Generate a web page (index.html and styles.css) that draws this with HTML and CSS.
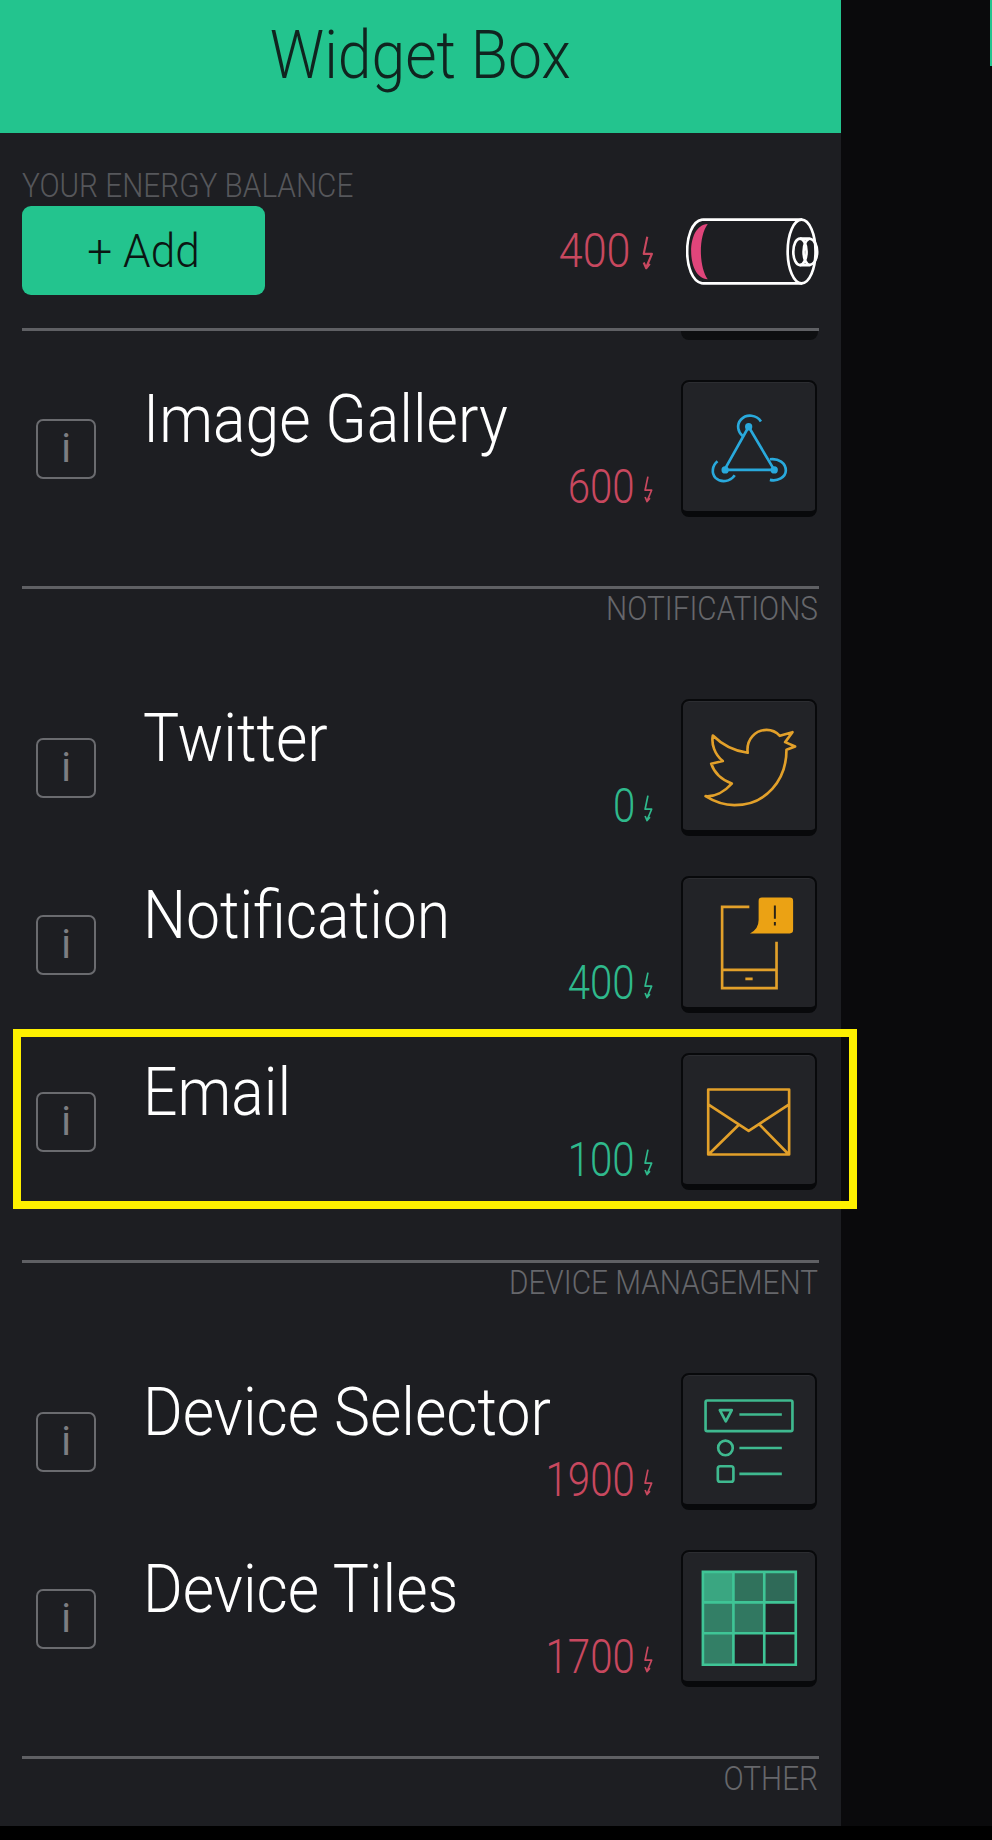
FILE: index.html
```html
<!DOCTYPE html>
<html lang="en">
<head>
<meta charset="utf-8">
<title>Widget Box</title>
<link rel="stylesheet" href="styles.css">
</head>
<body>
<svg class="defs" width="0" height="0" aria-hidden="true">
  <symbol id="bolt" viewBox="0 0 30 95">
    <path d="M13 2 L3 50 H26 L10 88 M3 74 L10 90 L20 78" fill="none" stroke="currentColor" stroke-width="6" stroke-linejoin="round"/>
  </symbol>
</svg>
<div class="screen">
  <main class="panel">
    <header class="header"><h1 class="title">Widget Box</h1></header>
    <section class="balance">
      <div class="label label-left">YOUR ENERGY BALANCE</div>
      <div class="balance-row">
        <button class="add"><span class="add-text">+ Add</span></button>
        <div class="balance-right">
          <div class="price red"><span class="amount amount-lg">400</span><svg class="bolt bolt-lg"><use href="#bolt"/></svg></div>
          <svg class="battery" viewBox="500 50 400 202">
            <path d="M565 68 C530 70 515 110 515 150 C515 190 530 232 565 235 C540 200 535 110 565 68 Z" fill="#e0457b"/>
            <g fill="none" stroke="#fff" stroke-width="8">
              <path d="M548 55 H850 M548 247 H850 M548 55 C516 60 503 110 503 150 C503 195 518 242 548 247"/>
              <ellipse cx="848" cy="151" rx="42" ry="96"/>
              <ellipse cx="843" cy="152" rx="20" ry="40"/>
              <path d="M843 112 H872 C888 115 895 135 895 152 C895 170 888 188 872 192 H843 M872 112 C848 122 848 182 872 192"/>
            </g>
          </svg>
        </div>
      </div>
    </section>
    <div class="divider divider-top"></div>
    <div class="stub-wrap"><div class="stub"></div></div>
    <div class="gallery-gap"></div>

    <div class="row">
      <div class="info"><span>i</span></div>
      <div class="body">
        <div class="name">Image Gallery</div>
        <div class="price red"><span class="amount">600</span><svg class="bolt"><use href="#bolt"/></svg></div>
      </div>
      <div class="tile">
        <svg class="icon" viewBox="68 570 402 404">
          <g fill="none" stroke="#29a9dc" stroke-width="8">
            <path d="M268 708 L195 838 H345 Z"/>
            <path d="M305 692 C292 672 262 668 245 686 C230 702 236 725 250 736"/>
            <path d="M174 812 C158 825 155 848 168 862 C185 878 212 874 226 854"/>
            <path d="M332 806 C358 802 380 818 380 840 C380 860 355 874 332 868"/>
          </g>
          <g fill="#29a9dc"><circle cx="268" cy="708" r="11"/><circle cx="197" cy="838" r="11"/><circle cx="345" cy="838" r="11"/></g>
        </svg>
      </div>
    </div>

    <div class="divider section-divider"></div>
    <div class="label label-right">NOTIFICATIONS</div>

    <div class="row">
      <div class="info"><span>i</span></div>
      <div class="body">
        <div class="name">Twitter</div>
        <div class="price green"><span class="amount">0</span><svg class="bolt"><use href="#bolt"/></svg></div>
      </div>
      <div class="tile">
        <svg class="icon" viewBox="68 58 402 404">
          <path d="M160 165 C190 195 225 212 265 217 C260 175 290 148 322 148 C340 148 352 155 362 166 L400 155 L378 185 L408 198 L382 208 C382 300 320 375 225 375 C195 375 165 365 138 348 C165 350 195 335 217 310 C190 300 165 280 155 250 L190 242 C165 222 155 190 160 165 Z" fill="none" stroke="#e2a02a" stroke-width="8" stroke-linejoin="round"/>
        </svg>
      </div>
    </div>
    <div class="row">
      <div class="info"><span>i</span></div>
      <div class="body">
        <div class="name">Notification</div>
        <div class="price green"><span class="amount">400</span><svg class="bolt"><use href="#bolt"/></svg></div>
      </div>
      <div class="tile">
        <svg class="icon" viewBox="68 590 402 404">
          <path d="M270 680 H188 V925 H352 V785 M188 870 H352 M258 897 H280" fill="none" stroke="#e2a02a" stroke-width="8"/>
          <path d="M308 652 H392 Q402 652 402 662 V750 Q402 760 392 760 H272 Q298 748 298 720 V662 Q298 652 308 652 Z" fill="#eba214"/>
          <path d="M347 676 V716 M347 726 V736" stroke="#2a2418" stroke-width="6" fill="none"/>
        </svg>
      </div>
    </div>
    <div class="row">
      <div class="info"><span>i</span></div>
      <div class="body">
        <div class="name">Email</div>
        <div class="price green"><span class="amount">100</span><svg class="bolt"><use href="#bolt"/></svg></div>
      </div>
      <div class="tile">
        <svg class="icon" viewBox="68 40 402 404">
          <path d="M146 147 H390 V343 H146 Z M146 192 L268 272 L390 192 M150 340 L240 252 M386 340 L300 252" fill="none" stroke="#e2a02a" stroke-width="8" stroke-linejoin="round"/>
        </svg>
      </div>
      <div class="highlight"></div>
    </div>

    <div class="divider section-divider section-divider-wide"></div>
    <div class="label label-right">DEVICE MANAGEMENT</div>

    <div class="row">
      <div class="info"><span>i</span></div>
      <div class="body">
        <div class="name">Device Selector</div>
        <div class="price red"><span class="amount">1900</span><svg class="bolt"><use href="#bolt"/></svg></div>
      </div>
      <div class="tile">
        <svg class="icon" viewBox="68 40 402 404">
          <g fill="none" stroke="#3fb98f" stroke-width="8" stroke-linejoin="round">
            <rect x="138" y="120" width="262" height="92" rx="5"/>
            <path d="M181 149 H217 L199 183 Z"/>
            <circle cx="198" cy="263" r="22"/>
            <rect x="175" y="318" width="47" height="47" rx="7"/>
            <path d="M240 162 H368 M240 263 H368 M240 341 H368"/>
          </g>
        </svg>
      </div>
    </div>
    <div class="row">
      <div class="info"><span>i</span></div>
      <div class="body">
        <div class="name">Device Tiles</div>
        <div class="price red"><span class="amount">1700</span><svg class="bolt"><use href="#bolt"/></svg></div>
      </div>
      <div class="tile">
        <svg class="icon" viewBox="68 570 402 404">
          <g fill="#3aa681">
            <rect x="130" y="633" width="92" height="92"/>
            <rect x="222" y="633" width="93" height="92" fill-opacity=".6"/>
            <rect x="315" y="633" width="95" height="92" fill-opacity=".55"/>
            <rect x="130" y="725" width="92" height="93" fill-opacity=".7"/>
            <rect x="222" y="725" width="93" height="93" fill-opacity=".65"/>
            <rect x="130" y="818" width="92" height="95" fill-opacity=".7"/>
          </g>
          <path d="M130 633 H410 V913 H130 Z M222 633 V913 M315 633 V913 M130 725 H410 M130 818 H410" fill="none" stroke="#3fc596" stroke-width="8"/>
        </svg>
      </div>
    </div>

    <div class="divider section-divider"></div>
    <div class="label label-right">OTHER</div>
  </main>
  <aside class="side"><div class="side-strip"></div></aside>
</div>
<div class="footer"></div>
</body>
</html>
```

FILE: styles.css
```css
* { box-sizing: border-box; }

html, body { margin: 0; padding: 0; }

body {
  background: #000;
  font-family: Roboto, "Liberation Sans", sans-serif;
  font-weight: 300;
  overflow: hidden;
}

.defs { position: absolute; }

.screen {
  display: flex;
  height: 1826px;
}

.footer { height: 14px; background: #000; }

.panel {
  width: 841px;
  height: 1826px;
  flex: none;
  background: #1d1e22;
  overflow: visible;
}

.side {
  flex: 1;
  background: #0a0a0c;
  display: flex;
  justify-content: flex-end;
  align-items: flex-start;
}

.side-strip { width: 2px; height: 66px; background: #23c48e; }

.header {
  height: 133px;
  background: #23c48e;
  display: flex;
  justify-content: center;
  padding-top: 21px;
}

.title {
  margin: 0;
  height: 68px;
  font-size: 67px;
  line-height: 68px;
  font-weight: 300;
  color: #10241f;
  transform: scaleX(.905);
}

.balance { padding: 35px 22px 0; }

.label {
  height: 34px;
  line-height: 34px;
  font-size: 34px;
  font-weight: 300;
  white-space: nowrap;
  color: #56575b;
}

.label-left { transform: scaleX(.875); transform-origin: left center; }

.label-right {
  margin-top: 2px;
  margin-bottom: 54px;
  padding-right: 23px;
  text-align: right;
  color: #66676b;
  transform: scaleX(.875);
  transform-origin: 818px center;
}

.balance-row {
  margin-top: 4px;
  display: flex;
  justify-content: space-between;
  align-items: center;
}

.add {
  width: 243px;
  height: 89px;
  border: 0;
  border-radius: 9px;
  background: #23c48e;
  color: #0b1512;
  font-family: inherit;
  font-size: 46px;
  font-weight: 300;
  padding: 0;
}

.add-text { display: inline-block; transform: scaleX(.96); }

.balance-right {
  display: flex;
  align-items: center;
  gap: 32px;
}

.battery { width: 133px; height: 67px; display: block; margin-top: 2px; }

.price {
  display: flex;
  align-items: center;
  justify-content: flex-end;
  height: 50px;
  line-height: 50px;
  font-size: 49px;
  font-weight: 300;
}

.amount { display: block; transform: scaleX(.82); transform-origin: right center; }
.amount-lg { transform: scaleX(.88); }

.red { color: #c8485f; }
.green { color: #2fb98c; }

.bolt { width: 9px; height: 27px; margin-left: 9px; margin-top: 5px; }
.bolt-lg { width: 12px; height: 34px; margin-left: 11px; }

.divider {
  height: 3px;
  margin: 0 22px;
  background: #5f6064;
}

.divider-top { margin-top: 33px; }

.stub-wrap { height: 9px; display: flex; justify-content: flex-end; padding-right: 23px; }

.stub {
  width: 137px;
  height: 9px;
  background: #0e0f11;
  border-radius: 0 0 8px 8px;
}

.gallery-gap { height: 20px; }

.row {
  position: relative;
  display: flex;
  align-items: center;
  height: 177px;
  padding: 0 24px 0 36px;
}

.info {
  flex: none;
  width: 60px;
  height: 60px;
  border: 2px solid #6a6b6f;
  border-radius: 7px;
  color: #7d7e82;
  font-size: 40px;
  font-weight: 400;
  line-height: 56px;
  text-align: center;
}

.body {
  flex: 1;
  align-self: stretch;
  margin-left: 47px;
  padding: 26px 28px 0 0;
}

.name {
  height: 68px;
  margin-bottom: 8px;
  font-size: 66px;
  line-height: 68px;
  font-weight: 300;
  white-space: nowrap;
  color: #fff;
  transform: scaleX(.919);
  transform-origin: left center;
}

.tile {
  flex: none;
  width: 136px;
  height: 137px;
  background: #222327;
  border: 2px solid #08090b;
  border-bottom-width: 6px;
  border-radius: 8px;
  box-shadow: inset 0 1px 0 #2c2d31;
  overflow: hidden;
}

.icon { display: block; width: 134px; height: 134px; margin: -1px; }

.highlight {
  position: absolute;
  left: 13px;
  top: -4px;
  right: -16px;
  bottom: 1px;
  border: 8px solid #fdf000;
  pointer-events: none;
}

.section-divider { margin-top: 49px; }
.section-divider-wide { margin-top: 50px; }
```
